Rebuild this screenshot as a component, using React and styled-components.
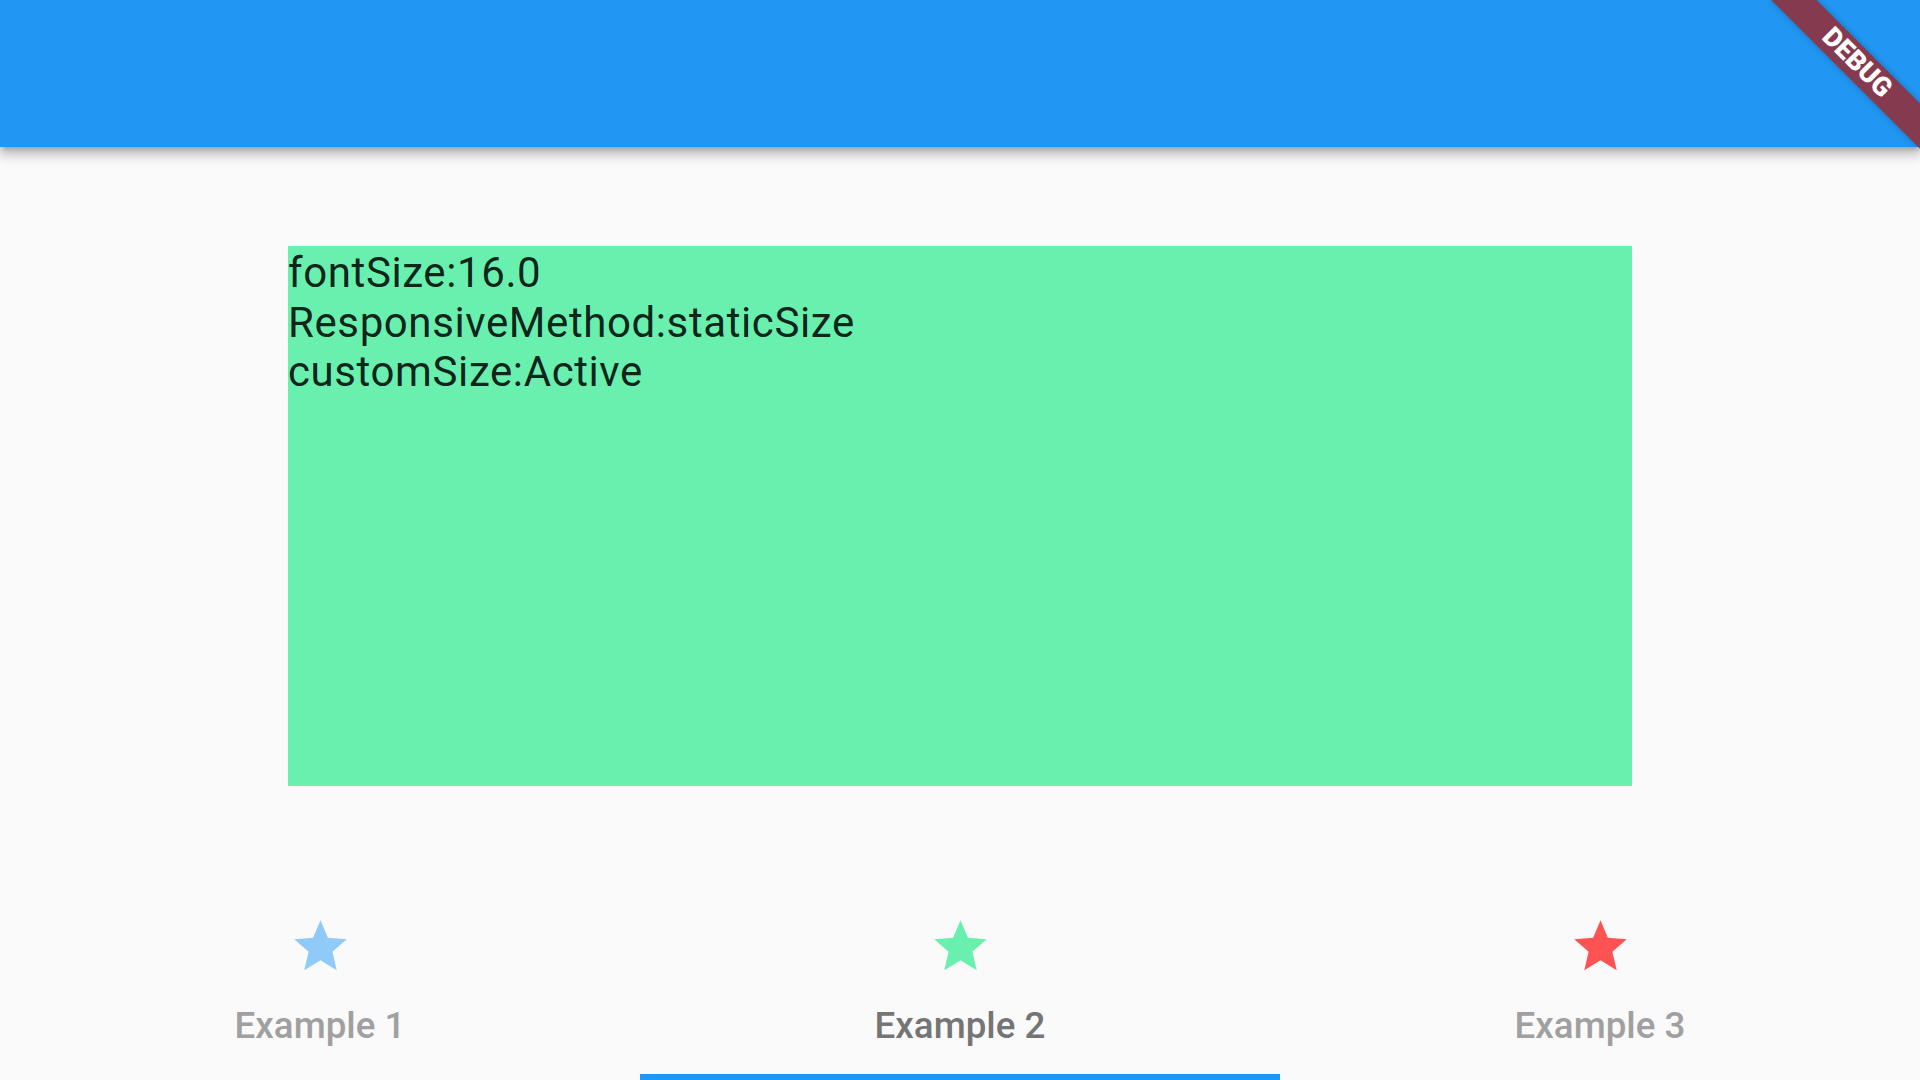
import React from 'react';
import styled, { createGlobalStyle } from 'styled-components';

const GlobalStyle = createGlobalStyle`
  html, body {
    margin: 0;
    padding: 0;
    background: #fafafa;
    font-family: Roboto, "Noto Sans", sans-serif;
  }
`;

const tabs = [
  { label: 'Example 1', color: '#90caf9' },
  { label: 'Example 2', color: '#69f0ae', selected: true },
  { label: 'Example 3', color: '#ff5252' },
];

const Star = ({ color }) => (
  <StarIcon viewBox="0 0 24 24">
    <path
      fill={color}
      d="M12 17.27L18.18 21l-1.64-7.03L22 9.24l-7.19-.61L12 2 9.19 8.63 2 9.24l5.46 4.73L5.82 21z"
    />
  </StarIcon>
);

const App = () => {
  return (
    <Screen>
      <GlobalStyle />
      <AppBar />
      <Body>
        <InfoBox>
          <Line>fontSize:16.0</Line>
          <Line>ResponsiveMethod:staticSize</Line>
          <Line>customSize:Active</Line>
        </InfoBox>
      </Body>
      <TabBar>
        {tabs.map((t) => (
          <Tab key={t.label} $selected={t.selected}>
            <Star color={t.color} />
            <TabLabel $selected={t.selected}>{t.label}</TabLabel>
          </Tab>
        ))}
      </TabBar>
      <DebugBanner>DEBUG</DebugBanner>
    </Screen>
  );
};

const Screen = styled.div`
  position: relative;
  width: 1920px;
  height: 1080px;
  overflow: hidden;
  display: flex;
  flex-direction: column;
  background: #fafafa;
`;

const AppBar = styled.header`
  height: 147px;
  flex-shrink: 0;
  background: #2196f3;
  box-shadow: 0 5px 5px -3px rgba(0, 0, 0, 0.2), 0 8px 10px 1px rgba(0, 0, 0, 0.14),
    0 3px 14px 2px rgba(0, 0, 0, 0.12);
  position: relative;
  z-index: 1;
`;

const Body = styled.main`
  flex: 1;
  display: flex;
  align-items: center;
  justify-content: center;
`;

const InfoBox = styled.div`
  width: 1344px;
  height: 540px;
  padding-top: 2px;
  box-sizing: border-box;
  background: #69f0ae;
`;

const Line = styled.div`
  font-size: 42px;
  line-height: 49.5px;
  letter-spacing: 0.6px;
  color: rgba(0, 0, 0, 0.87);
`;

const TabBar = styled.nav`
  height: 195px;
  flex-shrink: 0;
  display: grid;
  grid-template-columns: repeat(3, 1fr);
`;

const Tab = styled.div`
  display: flex;
  flex-direction: column;
  align-items: center;
  padding-top: 30px;
  box-sizing: border-box;
  border-bottom: 6px solid ${(p) => (p.$selected ? '#2196f3' : 'transparent')};
`;

const StarIcon = styled.svg`
  width: 63px;
  height: 63px;
  display: block;
`;

const TabLabel = styled.span`
  margin-top: 26px;
  font-size: 36.75px;
  line-height: 43px;
  font-weight: 500;
  color: ${(p) => (p.$selected ? '#757575' : '#a0a0a0')};
`;

const DebugBanner = styled.div`
  position: absolute;
  left: 1752px;
  top: 47px;
  width: 210px;
  height: 31.5px;
  transform: rotate(45deg);
  background: #853a4f;
  box-shadow: 0 0 6px rgba(0, 0, 0, 0.25);
  color: #fff;
  font-family: Roboto, "DejaVu Sans", sans-serif;
  font-weight: 900;
  font-size: 26.8px;
  line-height: 31.5px;
  text-align: center;
  z-index: 2;
`;

export default App;
